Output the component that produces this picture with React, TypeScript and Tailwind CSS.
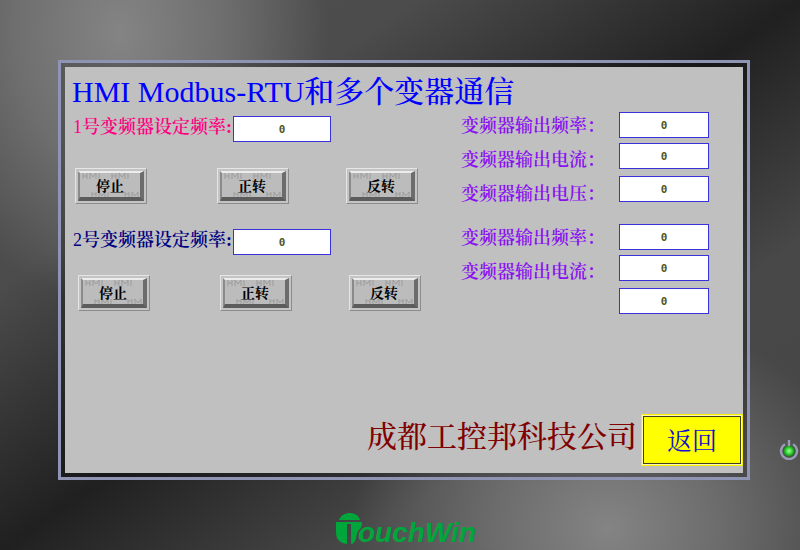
import React from "react";

const SONG = "font-['Liberation_Serif','Noto_Serif_CJK_SC','Noto_Sans_CJK_SC',serif]";
const FIELD =
  "h-[26px] border border-[#3a32d8] bg-white text-center font-['DejaVu_Sans_Mono',monospace] text-[11px] font-bold text-[#55551c] outline-none";

function KeyButton({ label }: { label: string }) {
  return (
    <button
      type="button"
      className="h-9 w-[72px] shrink-0 border border-t-[#e6e6e6] border-l-[#e6e6e6] border-b-[#8c8c8c] border-r-[#8c8c8c] bg-[#c4c4c4] p-[2px]"
    >
      <span className="relative flex h-full w-full items-center justify-center overflow-hidden border-2 border-r-4 border-b-4 border-t-[#ececec] border-l-[#8a8a8a] border-r-[#6c6c6c] border-b-[#5c5c5c] bg-[#bcbcbc]">
        <svg aria-hidden="true" className="absolute inset-0 h-full w-full" viewBox="0 0 60 24" fill="none" stroke="#9c9c9c" strokeWidth="1">
          <path d="M3 0v6M7 0v6M3 3h4M10 6V0l3 4 3-4v6M19 0v6M32 0v6M36 0v6M32 3h4M39 6V0l3 4 3-4v6M48 0v6" />
          <path d="M12 24v-5M16 24v-5M12 21h4M19 24v-5l3 4 3-4v5M28 24v-5M45 24v-5M49 24v-5M45 21h4M52 24v-5l3 4 3-4v5" />
        </svg>
        <span className={`relative pt-1 text-[14px] leading-5 font-bold text-black ${SONG}`}>{label}</span>
      </span>
    </button>
  );
}

function Drive({
  id,
  digit,
  labelClass,
  rowClass,
  keysClass,
}: {
  id: string;
  digit: string;
  labelClass: string;
  rowClass: string;
  keysClass: string;
}) {
  return (
    <section className={`flex flex-col ${rowClass}`}>
      <div className="flex items-start">
        <label
          htmlFor={id}
          className={`w-40 shrink-0 whitespace-nowrap text-[18px] leading-[22px] font-semibold ${SONG} ${labelClass}`}
        >
          <span className="font-normal">{digit}</span>号变频器设定频率:
        </label>
        <input id={id} defaultValue="0" className={`w-[98px] ${FIELD}`} />
      </div>
      <div className={`flex ${keysClass}`}>
        <KeyButton label="停止" />
        <div className="flex gap-[57px] pl-[70px]">
          <KeyButton label="正转" />
          <KeyButton label="反转" />
        </div>
      </div>
    </section>
  );
}

function Readouts({ id, labels }: { id: string; labels: string[] }) {
  return (
    <section className="flex h-[90px] items-start justify-between">
      <div className={`-mt-[3px] flex flex-col text-[18px] font-semibold text-[#8a10f0] ${SONG}`}>
        {labels.map((label, i) => (
          <label key={i} htmlFor={`${id}-${i}`} className="h-[34px] whitespace-nowrap leading-[34px]">
            {label}：
          </label>
        ))}
      </div>
      <div className="flex flex-col gap-[5px]">
        {[0, 1, 2].map((i) => (
          <input
            key={i}
            id={`${id}-${i}`}
            aria-label={labels[i] ?? "输出"}
            readOnly
            value="0"
            className={`w-[90px] last:mt-0.5 ${FIELD}`}
          />
        ))}
      </div>
    </section>
  );
}

function PowerIcon() {
  return (
    <svg aria-label="电源" role="img" className="h-5 w-5" viewBox="0 0 20 20" fill="none">
      <defs>
        <radialGradient id="lamp">
          <stop offset="0" stopColor="#a8ff90" />
          <stop offset=".5" stopColor="#35dc35" />
          <stop offset="1" stopColor="#1c6420" />
        </radialGradient>
      </defs>
      <path d="M6 4.2a8 8 0 1 0 8 0" stroke="#9a9bb4" strokeWidth="2.4" />
      <circle cx="10" cy="11" r="6" fill="url(#lamp)" />
      <path d="M10 0v6" stroke="#9a9bb4" strokeWidth="2.4" />
    </svg>
  );
}

export default function App() {
  return (
    <div className="flex min-h-screen flex-col bg-[radial-gradient(ellipse_26%_50%_at_15%_6%,#848484_0%,#84848499_50%,#84848400_100%),radial-gradient(ellipse_32%_40%_at_76%_96%,#848484_0%,#84848499_45%,#84848400_100%),linear-gradient(to_bottom_right,#505050_0%,#4c4c4c_26%,#202020_50%,#484848_72%,#464646_100%)] pt-[60px]">
      <div className="flex pl-[58px]">
        <div className="min-w-0 grow border-[3px] border-[#9094b4] bg-black/25 p-1">
          <main className="flex h-[406px] flex-col bg-[#c0c0c0]">
            <h1 className={`pt-[6px] pl-[7px] text-[30px] leading-[38px] font-medium whitespace-nowrap text-[#0000ff] ${SONG}`}>
              HMI Modbus-RTU和多个变器通信
            </h1>
            <div className="flex grow items-start justify-between pr-[34px] pl-2">
              <div className="flex flex-col gap-[25px] pt-[5px]">
                <Drive id="drive-1" digit="1" labelClass="text-[#ff0080]" rowClass="gap-[26px]" keysClass="pl-0.5" />
                <Drive id="drive-2" digit="2" labelClass="text-[#000080]" rowClass="gap-5" keysClass="pl-[5px]" />
              </div>
              <div className="flex w-[248px] flex-col gap-[22px] pt-px">
                <Readouts id="out-1" labels={["变频器输出频率", "变频器输出电流", "变频器输出电压"]} />
                <Readouts id="out-2" labels={["变频器输出频率", "变频器输出电流"]} />
              </div>
            </div>
            <footer className="flex items-start justify-end gap-1 pb-[7px]">
              <p className={`text-[30px] leading-[46px] font-medium whitespace-nowrap text-[#800000] ${SONG}`}>成都工控邦科技公司</p>
              <button type="button" className="h-[52px] w-[102px] border border-[#f4f000] bg-[#fff9b0] p-px">
                <span
                  className={`flex h-full w-full items-center justify-center border border-[#404020] bg-[#ffff00] pt-1 text-[25px] text-[#1010d0] ${SONG}`}
                >
                  返回
                </span>
              </button>
            </footer>
          </main>
        </div>
        <div className="flex w-[50px] shrink-0 items-end justify-end pr-[1px] pb-5">
          <PowerIcon />
        </div>
      </div>
      <div className="flex justify-center pt-8 pl-3">
        <div className="flex items-end text-[#00a53c]">
          <svg aria-hidden="true" className="h-8 w-[26px]" viewBox="0 0 26 32" fill="currentColor">
            <path d="M3 8C5 3 9 1 14 1s9 3 10 7z" />
            <path d="M0 12h11v20C3 31 0 27 0 20z" />
            <path d="M15 12h11c0 3-2 5-4 7-2 3-1 7-3 10-1 2-2 3-4 3z" />
            <path d="M0 10h26v2H0z" />
          </svg>
          <span className="-ml-1 font-['Liberation_Sans',sans-serif] text-[28px] leading-[22px] italic font-bold">ouchWin</span>
        </div>
      </div>
    </div>
  );
}
